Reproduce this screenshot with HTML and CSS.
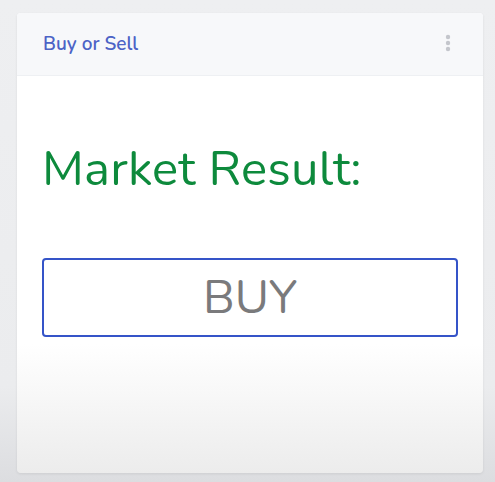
FILE: index.html
```html
<!DOCTYPE html>
<html>
<head>
<meta charset="utf-8">
<link rel="stylesheet" href="styles.css">
</head>
<body>
<div class="card">
  <div class="card-header">
    <span class="title">Buy or Sell</span>
    <svg class="menu" width="6" height="18" viewBox="0 0 6 18"><circle cx="3" cy="3" r="2.2" fill="#c4c6cc"/><circle cx="3" cy="9" r="2.2" fill="#c4c6cc"/><circle cx="3" cy="15" r="2.2" fill="#c4c6cc"/></svg>
  </div>
  <div class="card-body">
    <div class="result">Market Result:</div>
    <div class="answer">BUY</div>
  </div>
</div>
</body>
</html>
```
FILE: styles.css
```css
html, body { margin: 0; padding: 0; }
body {
  width: 495px;
  height: 482px;
  background: linear-gradient(to bottom, #eeeff1 0%, #ebecee 80%, #dcdde0 100%);
  font-family: "Nunito", "Lato", "Open Sans", sans-serif;
  padding: 13px 12px 9px 17px;
  box-sizing: border-box;
  overflow: hidden;
}
.card {
  height: 460px;
  background: linear-gradient(to bottom, #ffffff 0%, #ffffff 72%, #ececec 100%);
  border-radius: 4px;
  box-shadow: 0 1px 3px rgba(0,0,0,0.08);
  display: flex;
  flex-direction: column;
}
.card-header {
  height: 62px;
  background: #f7f8fa;
  border-bottom: 1px solid #eef0f3;
  border-radius: 4px 4px 0 0;
  display: flex;
  align-items: center;
  justify-content: space-between;
  padding: 0 32px 0 26px;
}
.title {
  color: #4c63c6;
  font-size: 19px;
  font-weight: 600;
}
.menu { margin-top: -2px; }
.card-body {
  padding: 63px 25px 0 25px;
}
.result {
  color: #0d8a3c;
  font-size: 49px;
  line-height: 60px;
  letter-spacing: 0.2px;
}
.answer {
  margin-top: 59px;
  height: 75px;
  border: 2px solid #3554c8;
  border-radius: 4px;
  display: flex;
  align-items: center;
  justify-content: center;
  color: #7a7a7c;
  font-size: 47px;
}
```
